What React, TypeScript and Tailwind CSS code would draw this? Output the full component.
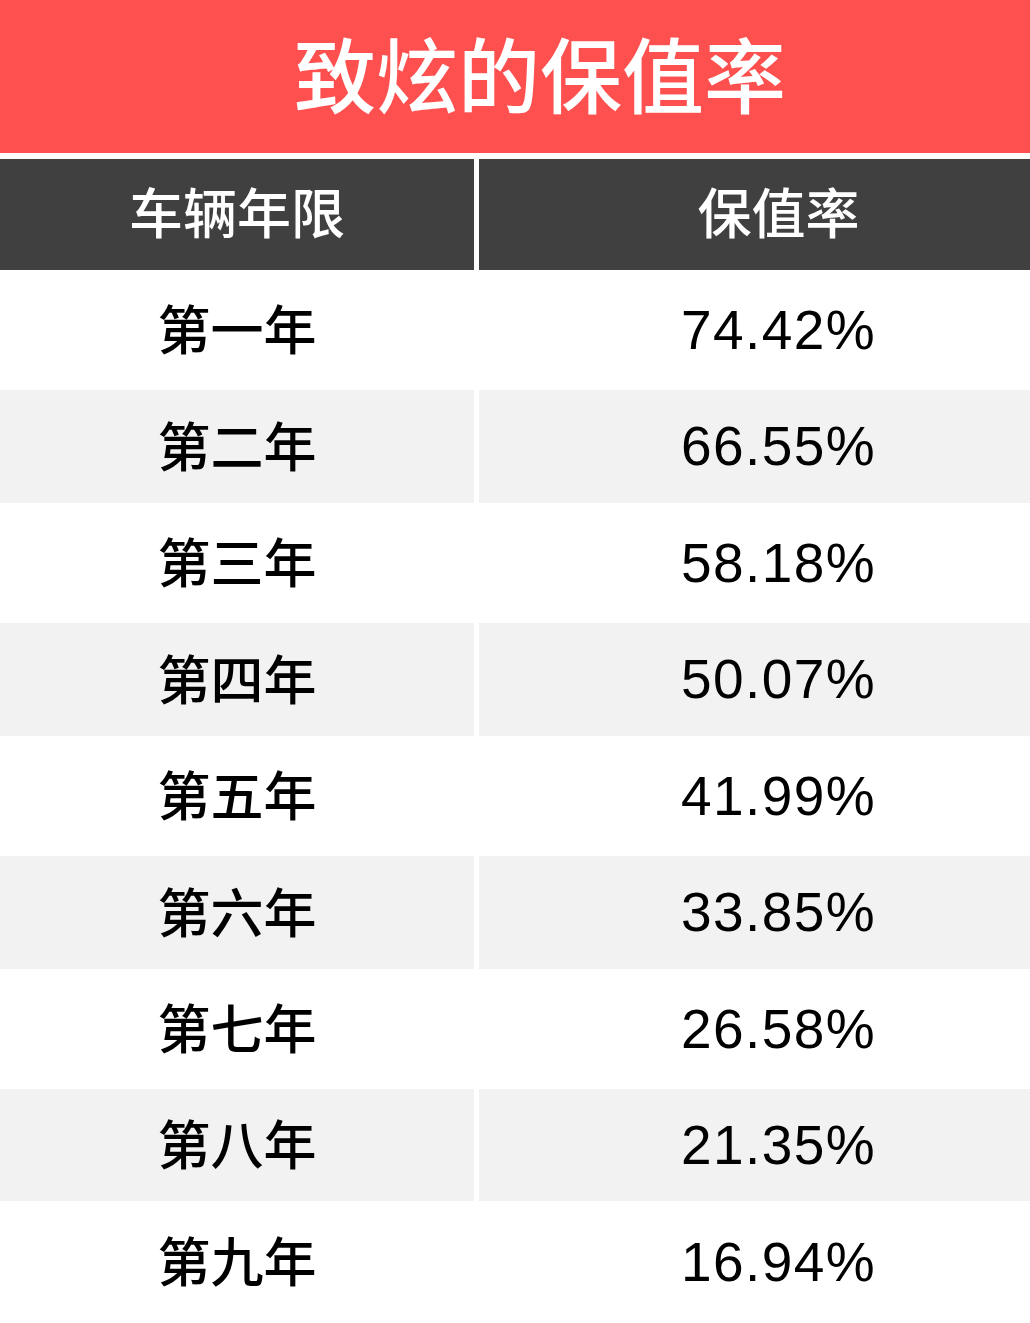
import React from "react";

const rows: { year: string; value: string; h: string; gray: boolean }[] = [
  { year: "第一年", value: "74.42%", h: "h-[120px]", gray: false },
  { year: "第二年", value: "66.55%", h: "h-[113px]", gray: true },
  { year: "第三年", value: "58.18%", h: "h-[120px]", gray: false },
  { year: "第四年", value: "50.07%", h: "h-[113px]", gray: true },
  { year: "第五年", value: "41.99%", h: "h-[120px]", gray: false },
  { year: "第六年", value: "33.85%", h: "h-[113px]", gray: true },
  { year: "第七年", value: "26.58%", h: "h-[120px]", gray: false },
  { year: "第八年", value: "21.35%", h: "h-[112px]", gray: true },
  { year: "第九年", value: "16.94%", h: "h-[122px]", gray: false },
];

export default function App() {
  const cjk = { fontFamily: '"Noto Sans CJK SC", "Noto Sans", sans-serif' };
  return (
    <div className="w-[1030px] h-[1323px] bg-white overflow-hidden" style={cjk}>
      <div className="h-[153px] bg-[#ff5050] flex items-center justify-center pl-[50px] pb-[10px]">
        <span className="text-white text-[82px] font-medium leading-none">致炫的保值率</span>
      </div>
      <div className="h-[6px] bg-white" />
      <div className="grid grid-cols-[474px_551px] gap-x-[5px] h-[111px]">
        <div className="bg-[#404040] flex items-center justify-center pb-[8px]">
          <span className="text-white text-[54px] font-medium leading-none">车辆年限</span>
        </div>
        <div className="bg-[#404040] flex items-center justify-center pl-[48px] pb-[8px]">
          <span className="text-white text-[54px] font-medium leading-none">保值率</span>
        </div>
      </div>
      {rows.map((r) => (
        <div key={r.year} className={`grid grid-cols-[474px_551px] gap-x-[5px] ${r.h}`}>
          <div className={`${r.gray ? "bg-[#f2f2f2]" : "bg-white"} flex items-center justify-center pb-[5px]`}>
            <span className="text-black text-[53px] font-medium leading-none">{r.year}</span>
          </div>
          <div className={`${r.gray ? "bg-[#f2f2f2]" : "bg-white"} flex items-center justify-center pl-[48px]`}>
            <span
              className="text-black text-[55px] leading-none tracking-[1.4px]"
              style={{ fontFamily: '"Liberation Sans", Arial, sans-serif' }}
            >
              {r.value}
            </span>
          </div>
        </div>
      ))}
    </div>
  );
}
